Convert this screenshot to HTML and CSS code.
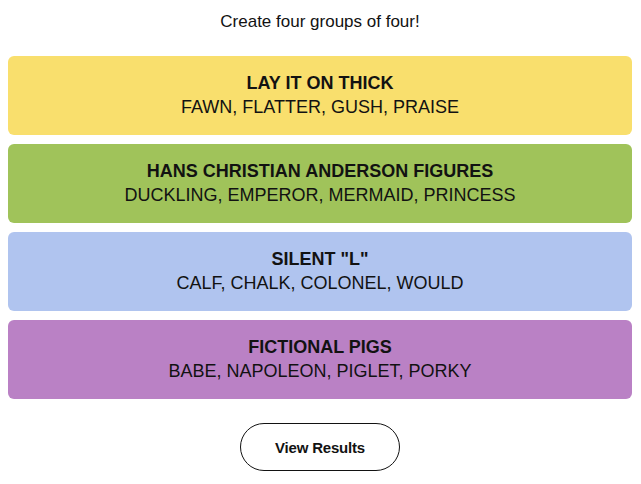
FILE: index.html
```html
<!DOCTYPE html>
<html>
<head>
<meta charset="utf-8">
<link rel="stylesheet" href="styles.css">
</head>
<body>
<main class="board">
  <p class="prompt">Create four groups of four!</p>
  <section class="groups">
    <div class="group yellow">
      <h3 class="group-title">LAY IT ON THICK</h3>
      <p class="group-words">FAWN, FLATTER, GUSH, PRAISE</p>
    </div>
    <div class="group green">
      <h3 class="group-title">HANS CHRISTIAN ANDERSON FIGURES</h3>
      <p class="group-words">DUCKLING, EMPEROR, MERMAID, PRINCESS</p>
    </div>
    <div class="group blue">
      <h3 class="group-title">SILENT "L"</h3>
      <p class="group-words">CALF, CHALK, COLONEL, WOULD</p>
    </div>
    <div class="group purple">
      <h3 class="group-title">FICTIONAL PIGS</h3>
      <p class="group-words">BABE, NAPOLEON, PIGLET, PORKY</p>
    </div>
  </section>
  <div class="actions">
    <button class="results-btn">View Results</button>
  </div>
</main>
</body>
</html>
```
FILE: styles.css
```css
* { box-sizing: border-box; }
html, body {
  margin: 0;
  padding: 0;
  background: #ffffff;
}
body {
  font-family: "Liberation Sans", Arial, sans-serif;
  color: #121212;
}
.board {
  padding: 0 9px 0 8px;
  display: flex;
  flex-direction: column;
}
.prompt {
  margin: 0;
  padding-top: 12px;
  height: 56px;
  text-align: center;
  font-size: 17px;
  line-height: 20px;
}
.groups {
  display: flex;
  flex-direction: column;
  gap: 9px;
}
.group {
  height: 79px;
  padding-bottom: 1px;
  border-radius: 6px;
  display: flex;
  flex-direction: column;
  align-items: center;
  justify-content: center;
  text-align: center;
}
.yellow { background: #f9df6d; }
.green { background: #a0c35a; }
.blue { background: #b0c4ef; }
.purple { background: #ba81c5; }
.group-title {
  margin: 0;
  font-size: 18px;
  font-weight: 700;
  line-height: 24px;
}
.group-words {
  margin: 0;
  font-size: 18px;
  font-weight: 400;
  line-height: 25px;
}
.actions {
  display: flex;
  justify-content: center;
  padding-top: 24px;
}
.results-btn {
  width: 160px;
  height: 48px;
  border: 1px solid #121212;
  border-radius: 24px;
  background: #fff;
  font-family: "Liberation Sans", Arial, sans-serif;
  font-size: 15px;
  font-weight: 700;
  color: #121212;
  letter-spacing: -0.2px;
}
```
